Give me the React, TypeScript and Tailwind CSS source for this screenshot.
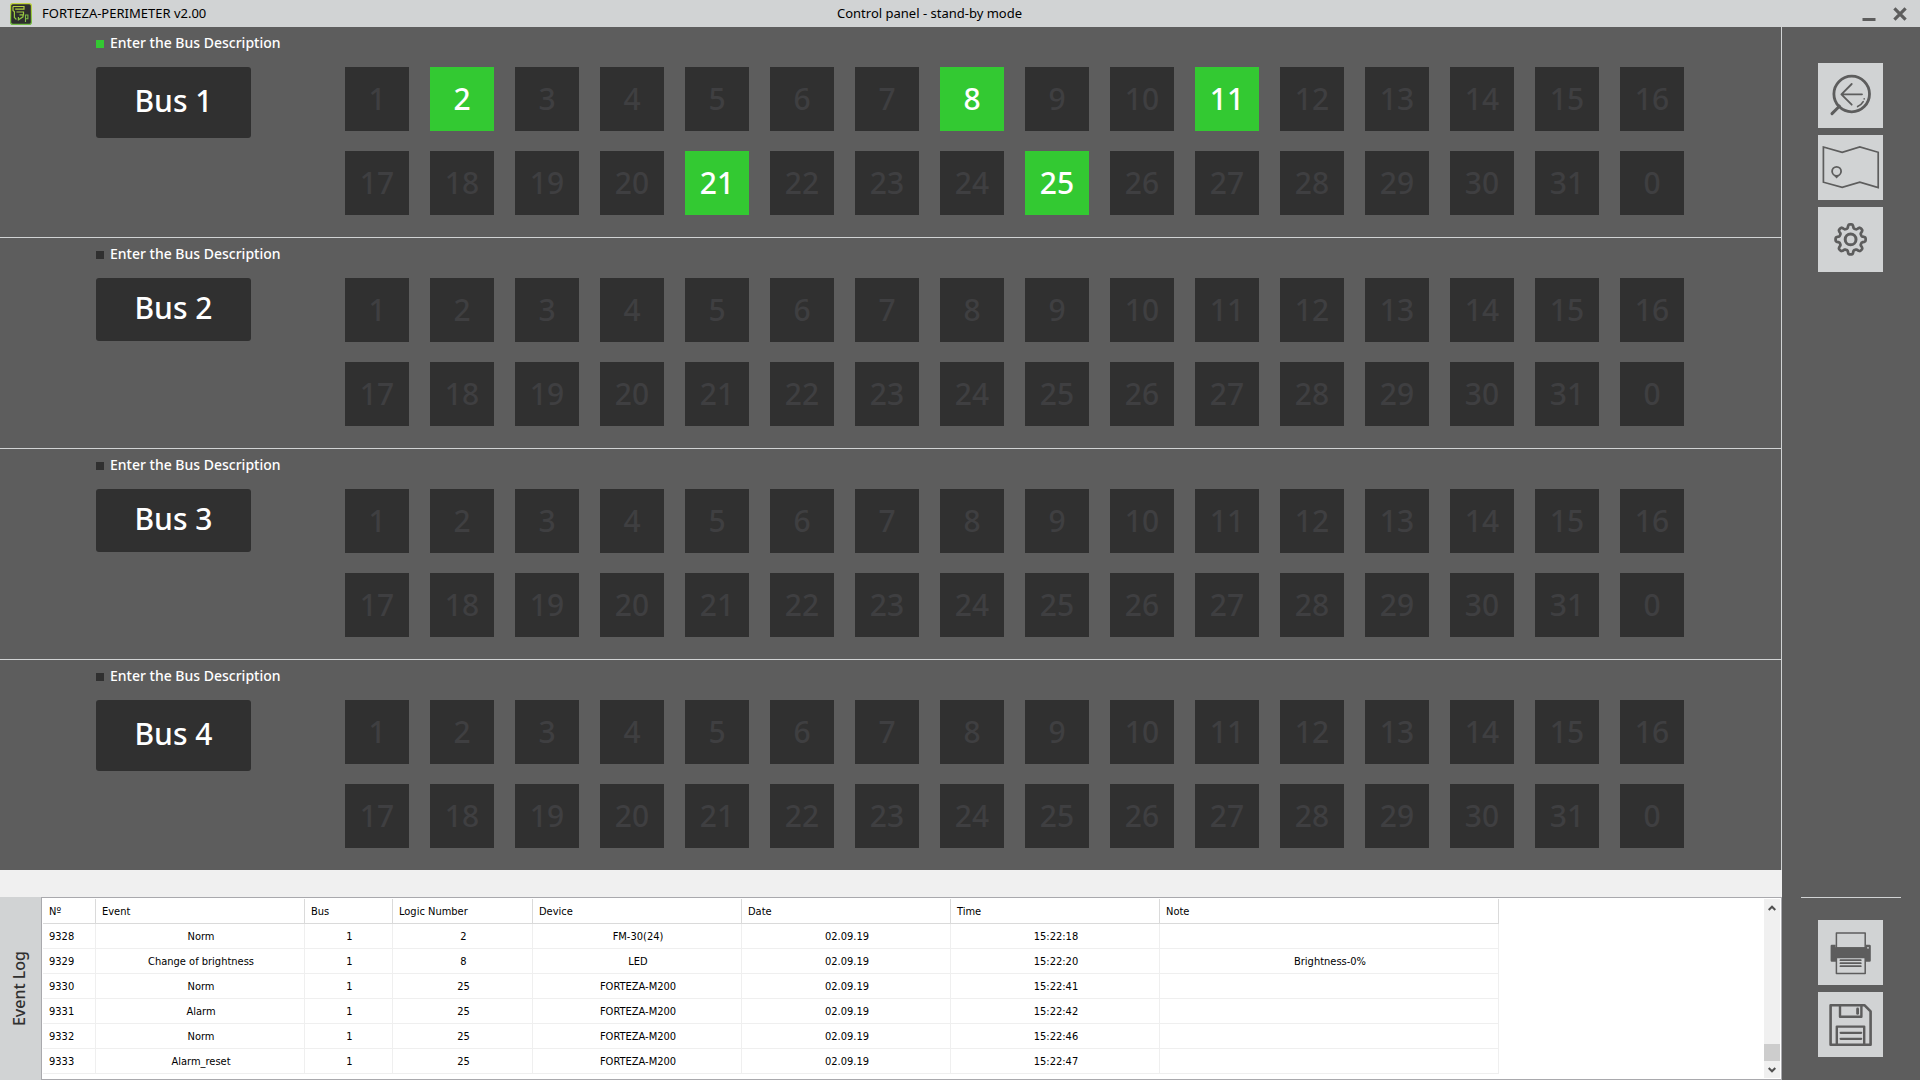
import { useState } from 'react';
import type { ReactNode } from 'react';
import clsx from 'clsx';

const buses = [
  { id: 1, online: true, active: [2, 8, 11, 21, 25], tall: true },
  { id: 2, online: false, active: [], tall: false },
  { id: 3, online: false, active: [], tall: false },
  { id: 4, online: false, active: [], tall: true },
];

// 1..31, then the broadcast address 0
const addresses = [...Array.from({ length: 31 }, (_, i) => i + 1), 0];

const columns = [
  { title: 'Nº', width: 'w-[53px]' },
  { title: 'Event', width: 'w-[209px]' },
  { title: 'Bus', width: 'w-[88px]' },
  { title: 'Logic Number', width: 'w-[140px]' },
  { title: 'Device', width: 'w-[209px]' },
  { title: 'Date', width: 'w-[209px]' },
  { title: 'Time', width: 'w-[209px]' },
  { title: 'Note', width: 'w-[339px]' },
];

const events = [
  ['9328', 'Norm', '1', '2', 'FM-30(24)', '02.09.19', '15:22:18', ''],
  ['9329', 'Change of brightness', '1', '8', 'LED', '02.09.19', '15:22:20', 'Brightness-0%'],
  ['9330', 'Norm', '1', '25', 'FORTEZA-M200', '02.09.19', '15:22:41', ''],
  ['9331', 'Alarm', '1', '25', 'FORTEZA-M200', '02.09.19', '15:22:42', ''],
  ['9332', 'Norm', '1', '25', 'FORTEZA-M200', '02.09.19', '15:22:46', ''],
  ['9333', 'Alarm_reset', '1', '25', 'FORTEZA-M200', '02.09.19', '15:22:47', ''],
];

// eight rounded teeth around the centre of the 65x65 button
const gearPath =
  Array.from({ length: 144 }, (_, i) => {
    const a = (i / 144) * Math.PI * 2;
    const r = 13.2 + 1.9 * Math.tanh(2.2 * Math.cos(8 * a));
    const x = 32.6 + r * Math.sin(a);
    const y = 32.4 - r * Math.cos(a);
    return `${i === 0 ? 'M' : 'L'}${x.toFixed(2)} ${y.toFixed(2)}`;
  }).join('') + 'Z';

function Logo() {
  return (
    <svg viewBox="0 0 22 22" className="size-[22px] shrink-0" fill="none" aria-hidden="true">
      <defs>
        <linearGradient id="logo-edge" gradientUnits="userSpaceOnUse" x1="0" y1="0" x2="0" y2="22">
          <stop offset="0" stopColor="#c4d63c" />
          <stop offset="1" stopColor="#6fba45" />
        </linearGradient>
      </defs>
      <rect x="0.6" y="0.6" width="20.8" height="20.8" rx="2.2" fill="#2d2e2d" stroke="url(#logo-edge)" strokeWidth="1.2" />
      <path d="M3 3.5h11v2.6H5.2M3 3.5v4l1.4 1.2v5.8l2 2M6.5 9h7v2.8h-4M13 12.2v1.6l-4.6 3V14" stroke="url(#logo-edge)" strokeWidth="1.2" />
      <path d="M15.5 19v-7h2.4v3.8h-2.4" stroke="#7dbd45" strokeWidth="1.1" />
    </svg>
  );
}

function SearchBackIcon() {
  return (
    <>
      <circle cx="33.7" cy="31" r="17.8" strokeWidth="2.8" />
      <path d="M21.4 43.2 14 50.6" strokeWidth="3" />
      <path d="M44 31.3H23.6M33.7 21 23.4 31.3l10.3 10.4" strokeWidth="1.8" />
      <path d="M39.6 43.6q3.6-1.6 5.6-5M46.2 36v-.3" strokeWidth="1.6" />
    </>
  );
}

function MapIcon() {
  return (
    <>
      <path d="M5.4 12 24.2 17.3 41.8 12 60.2 17.3V52.6L41.8 47.2 24.2 52.4 5.4 47.2Z" strokeWidth="1.7" strokeLinejoin="miter" />
      <circle cx="18.6" cy="36.3" r="4.5" strokeWidth="1.8" />
      <path d="M15.6 40.2 18.6 43.4 21.6 40.2Z" fill="currentColor" stroke="none" />
    </>
  );
}

function GearIcon() {
  return (
    <>
      <path d={gearPath} strokeWidth="2.7" />
      <circle cx="32.6" cy="32.4" r="5.4" strokeWidth="3" />
    </>
  );
}

function PrinterIcon() {
  return (
    <>
      <rect x="18.4" y="13" width="28.8" height="15" strokeWidth="1.5" />
      <path d="M12.6 26q0-1.2 1.2-1.2h3.8v2.4h30.4v-2.4h3.6q1.2 0 1.2 1.2v14.6q0 1.2-1.2 1.2H13.8q-1.2 0-1.2-1.2Z" fill="currentColor" stroke="none" />
      <rect x="18.4" y="37.4" width="28.8" height="16" fill="#d1d3d4" strokeWidth="1.5" />
      <path d="M22.4 40.2h20.4M22.4 43.2h20.4M22.4 46.2h20.4" strokeWidth="1.7" />
      <circle cx="50" cy="27.8" r="0.9" fill="#d1d3d4" stroke="none" />
    </>
  );
}

function FloppyIcon() {
  return (
    <>
      <path d="M12.6 13.2H46.4L52.6 19.4V52.8H12.6Z" strokeWidth="2.6" />
      <path d="M22 13.2V24.8H43.4V13.2M18.8 52.8V34.6H46.2V52.8" strokeWidth="2.4" />
      <path d="M39.6 17v4.4" strokeWidth="2.8" />
      <path d="M22.6 40.8h20.6M22.6 46.8h20.6" strokeWidth="2.2" />
    </>
  );
}

function ToolButton({ label, children }: { label: string; children: ReactNode }) {
  return (
    <button type="button" aria-label={label} className="mr-px size-[65px] bg-[#d1d3d4] text-[#5d5d5d] hover:bg-white">
      <svg
        viewBox="0 0 65 65"
        className="block size-full"
        fill="none"
        stroke="currentColor"
        strokeLinecap="round"
        strokeLinejoin="round"
        aria-hidden="true"
      >
        {children}
      </svg>
    </button>
  );
}

function TitleBar() {
  return (
    <header className="flex h-[27px] bg-[#d1d3d4] text-[13px] text-black">
      <div className="grid flex-1 grid-cols-[1fr_auto_1fr] items-center">
        <div className="flex items-center gap-2.5 pl-2.5">
          <Logo />
          <h1>FORTEZA-PERIMETER v2.00</h1>
        </div>
        <p>Control panel - stand-by mode</p>
      </div>
      <div className="flex w-[61px] items-center gap-[17px] pl-[3px] text-[#5d5d5d]">
        <button type="button" aria-label="Minimize">
          <svg viewBox="0 0 14 14" className="block size-3.5" aria-hidden="true">
            <path d="M0.5 11h13v3h-13z" fill="currentColor" />
          </svg>
        </button>
        <button type="button" aria-label="Close">
          <svg viewBox="0 0 14 14" className="block size-3.5" fill="none" aria-hidden="true">
            <path d="m1.4 1.4 11.2 11.2M12.6 1.4 1.4 12.6" stroke="currentColor" strokeWidth="3.2" />
          </svg>
        </button>
      </div>
    </header>
  );
}

function BusSection({ id, online, active, tall }: { id: number; online: boolean; active: number[]; tall: boolean }) {
  return (
    <section className="border-b border-[#d1d3d4] pb-[22px] pl-24 last:border-b-0">
      <div className="flex h-10 items-center gap-1.5 pb-2">
        <span className={clsx('mt-0.5 size-2', online ? 'bg-[#33c932]' : 'bg-[#303030]')} />
        <p className="text-sm font-medium text-white">Enter the Bus Description</p>
      </div>
      <div className="flex items-start">
        <button
          type="button"
          className={clsx(
            'w-[155px] shrink-0 rounded-[3px] bg-[#303030] pb-1 text-3xl font-medium text-white',
            tall ? 'h-[71px]' : 'h-[63px]',
          )}
        >
          Bus {id}
        </button>
        <div className="mr-[97px] ml-[94px] grid flex-1 grid-cols-[repeat(16,64px)] justify-between gap-y-5">
          {addresses.map((n) => (
            <button
              key={n}
              type="button"
              className={clsx(
                'h-16 text-3xl font-medium',
                active.includes(n) ? 'bg-[#33c932] text-white' : 'bg-[#303030] text-[#3f3f41]',
              )}
            >
              {n}
            </button>
          ))}
        </div>
      </div>
    </section>
  );
}

function ScrollBar() {
  return (
    <div className="flex w-4 shrink-0 flex-col items-center bg-[#f0f0f0] text-[#505050]">
      <button type="button" aria-label="Scroll up" className="flex h-[17px] w-full items-center justify-center">
        <svg viewBox="0 0 8 6" className="h-1.5 w-2" fill="none" aria-hidden="true">
          <path d="m0.7 5 3.3-3.3L7.3 5" stroke="currentColor" strokeWidth="2" />
        </svg>
      </button>
      <div className="mt-auto h-[17px] w-full bg-[#cdcdcd]" />
      <button type="button" aria-label="Scroll down" className="flex h-[17px] w-full items-center justify-center">
        <svg viewBox="0 0 8 6" className="h-1.5 w-2" fill="none" aria-hidden="true">
          <path d="m0.7 1 3.3 3.3L7.3 1" stroke="currentColor" strokeWidth="2" />
        </svg>
      </button>
    </div>
  );
}

function EventLog() {
  const [selected, setSelected] = useState<string | null>(null);

  return (
    <div className="flex flex-1">
      <div className="flex w-[41px] shrink-0 items-center justify-center bg-[#d1d3d4] pr-1">
        <h2 className="rotate-180 text-base font-medium text-[#303030] [writing-mode:vertical-rl]">Event Log</h2>
      </div>
      <div className="flex flex-1 justify-between border border-[#a9a9ad] bg-white p-px">
        <table className="w-[1456px] table-fixed border-separate border-spacing-0 self-start font-['DejaVu_Sans_Condensed','DejaVu_Sans',sans-serif] text-[11px] leading-4 text-black">
          <thead>
            <tr>
              {columns.map((c) => (
                <th
                  key={c.title}
                  scope="col"
                  className={clsx('h-[25px] border-r border-b border-[#dadada] pt-0.5 pr-1 pb-0 pl-1.5 text-left font-normal', c.width)}
                >
                  {c.title}
                </th>
              ))}
            </tr>
          </thead>
          <tbody>
            {events.map((row) => (
              <tr key={row[0]} onClick={() => setSelected(row[0])} className={clsx(selected === row[0] && 'bg-[#cce8ff]')}>
                {row.map((cell, i) => (
                  <td
                    key={columns[i].title}
                    className={clsx('h-[25px] border-r border-b border-[#efefef] pt-0.5 pr-1 pb-0 pl-1.5', i > 0 && 'text-center')}
                  >
                    {cell}
                  </td>
                ))}
              </tr>
            ))}
          </tbody>
        </table>
        <ScrollBar />
      </div>
    </div>
  );
}

export default function App() {
  return (
    <div className="flex min-h-screen flex-col bg-[#5d5d5d] font-['Noto_Sans','Open_Sans',sans-serif]">
      <TitleBar />
      <div className="flex flex-1">
        <main className="flex min-w-0 flex-1 flex-col">
          <div className="border-r border-[#d1d3d4]">
            {buses.map((bus) => (
              <BusSection key={bus.id} {...bus} />
            ))}
          </div>
          <div className="h-[27px] bg-[#f0f0f0]" />
          <EventLog />
        </main>
        <aside className="flex w-[138px] shrink-0 flex-col items-center gap-[7px] pt-9 pb-[23px]">
          <ToolButton label="Back to search">
            <SearchBackIcon />
          </ToolButton>
          <ToolButton label="Map">
            <MapIcon />
          </ToolButton>
          <ToolButton label="Settings">
            <GearIcon />
          </ToolButton>
          <hr className="mt-auto mb-[15px] w-[100px] border-[#d1d3d4]" />
          <ToolButton label="Print">
            <PrinterIcon />
          </ToolButton>
          <ToolButton label="Save">
            <FloppyIcon />
          </ToolButton>
        </aside>
      </div>
    </div>
  );
}
